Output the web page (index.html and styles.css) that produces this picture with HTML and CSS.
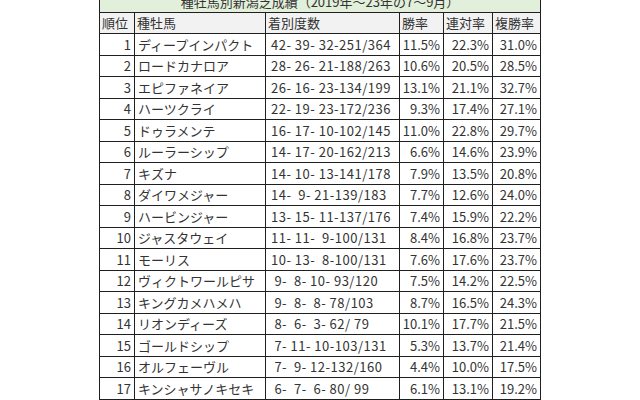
FILE: index.html
```html
<!DOCTYPE html>
<html lang="ja">
<head>
<meta charset="utf-8">
<title>種牡馬別新潟芝成績</title>
<link rel="stylesheet" href="styles.css">
</head>
<body>
<table class="stats">
  <colgroup>
    <col class="c-rank">
    <col class="c-sire">
    <col class="c-record">
    <col class="c-win">
    <col class="c-quin">
    <col class="c-place">
  </colgroup>
  <thead>
    <tr class="title-row"><th colspan="6">種牡馬別新潟芝成績（2019年～23年の7～9月）</th></tr>
    <tr class="head-row"><th>順位</th><th>種牡馬</th><th>着別度数</th><th>勝率</th><th>連対率</th><th>複勝率</th></tr>
  </thead>
  <tbody>
    <tr><td class="num">1</td><td class="name">ディープインパクト</td><td class="rec">42- 39- 32-251/364</td><td class="num">11.5%</td><td class="num">22.3%</td><td class="num">31.0%</td></tr>
    <tr><td class="num">2</td><td class="name">ロードカナロア</td><td class="rec">28- 26- 21-188/263</td><td class="num">10.6%</td><td class="num">20.5%</td><td class="num">28.5%</td></tr>
    <tr><td class="num">3</td><td class="name">エピファネイア</td><td class="rec">26- 16- 23-134/199</td><td class="num">13.1%</td><td class="num">21.1%</td><td class="num">32.7%</td></tr>
    <tr><td class="num">4</td><td class="name">ハーツクライ</td><td class="rec">22- 19- 23-172/236</td><td class="num">9.3%</td><td class="num">17.4%</td><td class="num">27.1%</td></tr>
    <tr><td class="num">5</td><td class="name">ドゥラメンテ</td><td class="rec">16- 17- 10-102/145</td><td class="num">11.0%</td><td class="num">22.8%</td><td class="num">29.7%</td></tr>
    <tr><td class="num">6</td><td class="name">ルーラーシップ</td><td class="rec">14- 17- 20-162/213</td><td class="num">6.6%</td><td class="num">14.6%</td><td class="num">23.9%</td></tr>
    <tr><td class="num">7</td><td class="name">キズナ</td><td class="rec">14- 10- 13-141/178</td><td class="num">7.9%</td><td class="num">13.5%</td><td class="num">20.8%</td></tr>
    <tr><td class="num">8</td><td class="name">ダイワメジャー</td><td class="rec">14-  9- 21-139/183</td><td class="num">7.7%</td><td class="num">12.6%</td><td class="num">24.0%</td></tr>
    <tr><td class="num">9</td><td class="name">ハービンジャー</td><td class="rec">13- 15- 11-137/176</td><td class="num">7.4%</td><td class="num">15.9%</td><td class="num">22.2%</td></tr>
    <tr><td class="num">10</td><td class="name">ジャスタウェイ</td><td class="rec">11- 11-  9-100/131</td><td class="num">8.4%</td><td class="num">16.8%</td><td class="num">23.7%</td></tr>
    <tr><td class="num">11</td><td class="name">モーリス</td><td class="rec">10- 13-  8-100/131</td><td class="num">7.6%</td><td class="num">17.6%</td><td class="num">23.7%</td></tr>
    <tr><td class="num">12</td><td class="name">ヴィクトワールピサ</td><td class="rec"> 9-  8- 10- 93/120</td><td class="num">7.5%</td><td class="num">14.2%</td><td class="num">22.5%</td></tr>
    <tr><td class="num">13</td><td class="name">キングカメハメハ</td><td class="rec"> 9-  8-  8- 78/103</td><td class="num">8.7%</td><td class="num">16.5%</td><td class="num">24.3%</td></tr>
    <tr><td class="num">14</td><td class="name">リオンディーズ</td><td class="rec"> 8-  6-  3- 62/ 79</td><td class="num">10.1%</td><td class="num">17.7%</td><td class="num">21.5%</td></tr>
    <tr><td class="num">15</td><td class="name">ゴールドシップ</td><td class="rec"> 7- 11- 10-103/131</td><td class="num">5.3%</td><td class="num">13.7%</td><td class="num">21.4%</td></tr>
    <tr><td class="num">16</td><td class="name">オルフェーヴル</td><td class="rec"> 7-  9- 12-132/160</td><td class="num">4.4%</td><td class="num">10.0%</td><td class="num">17.5%</td></tr>
    <tr><td class="num">17</td><td class="name">キンシャサノキセキ</td><td class="rec"> 6-  7-  6- 80/ 99</td><td class="num">6.1%</td><td class="num">13.1%</td><td class="num">19.2%</td></tr>
  </tbody>
</table>
</body>
</html>
```
FILE: styles.css
```css
html, body {
  margin: 0;
  padding: 0;
  background: #ffffff;
}

body {
  font-family: "Noto Sans CJK JP", "Noto Sans", sans-serif;
  font-size: 13px;
  color: #333333;
  overflow: hidden;
}

.stats {
  border-collapse: collapse;
  table-layout: fixed;
  width: 441px;
  margin: -10px auto 0;
}

.c-rank { width: 35px; }
.c-sire { width: 131px; }
.c-record { width: 134px; }
.c-win { width: 44px; }
.c-quin { width: 49px; }
.c-place { width: 48px; }

.stats th,
.stats td {
  border: 1px solid #1f1f1f;
  padding: 0 2px;
  height: 20.5px;
  line-height: 19px;
  white-space: pre;
  overflow: hidden;
  font-weight: 400;
}

.title-row th {
  background: #e2efda;
  text-align: center;
}

.head-row th {
  background: #f2f2f2;
  text-align: left;
  padding-left: 2px;
}

.stats td.num {
  text-align: right;
  padding-right: 3px;
}

.stats td.name {
  padding-left: 3px;
}

.stats td.rec {
  padding-left: 5px;
  letter-spacing: 0.5px;
}
```
